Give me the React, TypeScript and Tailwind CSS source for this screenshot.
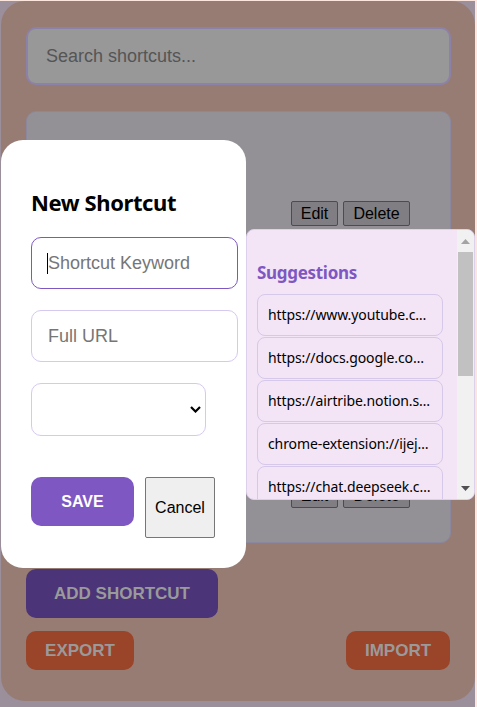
import React from "react";

const ARIAL = "font-['Liberation_Sans',Arial,sans-serif]";
const SEGOE = "font-['Noto_Sans','Open_Sans',sans-serif]";

const suggestions = [
  "https://www.youtube.com/watch?v=dQw4w9WgXcQ",
  "https://docs.google.com/document/d/1x2y3z",
  "https://airtribe.notion.site/course-notes",
  "chrome-extension://ijejnggjjphlenbhmjhhgcdpehhacaal/popup.html",
  "https://chat.deepseek.com/a/chat/s/123",
];

function ShortcutRow() {
  return (
    <div className={`flex justify-end gap-[5px] pr-[40px] ${ARIAL} text-[16px] text-black`}>
      <button className="h-[25px] w-[47px] rounded-[2px] border border-[#4d4b4f] bg-[#807e82]">Edit</button>
      <button className="h-[25px] w-[67px] rounded-[2px] border border-[#4d4b4f] bg-[#807e82]">Delete</button>
    </div>
  );
}

function Scrollbar() {
  return (
    <div className="flex w-[17px] shrink-0 flex-col items-center bg-[#f1f1f1]">
      <div className="flex h-[22px] w-full items-center justify-center">
        <svg width="9" height="5" viewBox="0 0 9 5">
          <path d="M0 5 L4.5 0 L9 5 Z" fill="#a3a3a3" />
        </svg>
      </div>
      <div className="h-[124px] w-[15px] bg-[#c1c1c1]" />
      <div className="flex-1" />
      <div className="flex h-[22px] w-full items-center justify-center">
        <svg width="9" height="5" viewBox="0 0 9 5">
          <path d="M0 0 L4.5 5 L9 0 Z" fill="#505050" />
        </svg>
      </div>
    </div>
  );
}

export default function App() {
  return (
    <div className="relative h-[707px] w-[477px] overflow-hidden bg-[#fbe5dc] pr-[2px] pt-px">
      <div className="h-full bg-[#9b8f9c] pl-px">
        {/* popup body, dimmed by the modal */}
        <div className="flex h-[700px] flex-col rounded-[24px] bg-[#977c74] pb-[26px] pl-[25px] pr-[24px] pt-[26px]">
          <div
            className={`flex h-[58px] items-center rounded-[10px] border-2 border-[#8c81a9] bg-[#989898] pl-[18px] ${ARIAL} text-[18px] text-[#555]`}
          >
            Search shortcuts...
          </div>

          <div className="mt-[26px] flex h-[432px] flex-col rounded-[10px] border border-[#8b879f] bg-[#939196] pt-[89px]">
            <ShortcutRow />
            <div className="h-[257px]" />
            <ShortcutRow />
          </div>

          <button
            className={`mt-[26px] h-[49px] w-[192px] rounded-[10px] bg-[#4b3477] ${ARIAL} text-[17px] font-bold text-[#9a9a9a]`}
          >
            ADD SHORTCUT
          </button>

          <div className={`mt-[13px] flex justify-between ${ARIAL} text-[17px] font-bold text-[#9a9a9a]`}>
            <button className="h-[39px] w-[108px] rounded-[10px] bg-[#9a442a]">EXPORT</button>
            <button className="mr-px h-[39px] w-[104px] rounded-[10px] bg-[#9a442a]">IMPORT</button>
          </div>
        </div>
      </div>

      {/* modal */}
      <div className="absolute left-px top-[140px] flex h-[428px] w-[245px] flex-col rounded-[22px] bg-white pl-[30px] pt-[49px]">
        <h2 className={`${SEGOE} text-[22px] font-bold leading-[27px] tracking-[-0.4px] text-black`}>New Shortcut</h2>
        <div className="relative mt-[21px]">
          <input
            readOnly
            placeholder="Shortcut Keyword"
            className={`h-[52px] w-[207px] rounded-[10px] border border-[#7e57c2] bg-white pl-[16px] ${ARIAL} text-[18px] outline-none placeholder:text-[#767676]`}
          />
          <div className="absolute left-[16px] top-[16px] h-[21px] w-px bg-black" />
        </div>
        <input
          readOnly
          placeholder="Full URL"
          className={`mt-[21px] h-[52px] w-[207px] rounded-[10px] border border-[#d6c9ef] bg-white pl-[16px] ${ARIAL} text-[18px] outline-none placeholder:text-[#767676]`}
        />
        <div className="relative mt-[21px] h-[53px] w-[175px] rounded-[10px] border border-[#d6c9ef] bg-white">
          <svg className="absolute left-[158px] top-[22px]" width="11" height="7" viewBox="0 0 11 7">
            <path d="M1 1 L5.5 5.5 L10 1" fill="none" stroke="#000" strokeWidth="2.2" />
          </svg>
        </div>
        <div className="mt-[41px] flex items-start gap-[11px]">
          <button
            className={`h-[49px] w-[103px] rounded-[10px] bg-[#7e57c2] ${ARIAL} text-[16px] font-bold text-white`}
          >
            SAVE
          </button>
          <button
            className={`h-[61px] w-[70px] rounded-[2px] border border-[#767676] bg-[#efefef] ${ARIAL} text-[16px] text-black`}
          >
            Cancel
          </button>
        </div>
      </div>

      {/* suggestions dropdown */}
      <div className="absolute left-[246px] top-[229px] flex h-[271px] w-[229px] overflow-hidden rounded-[8px] border border-[#ddd0ea] bg-[#f3e5f5]">
        <div className="min-w-0 flex-1 pl-[10px] pr-[14px] pt-[31px]">
          <h3 className={`${SEGOE} text-[17px] font-bold leading-[24px] tracking-[-0.3px] text-[#7e57c2]`}>Suggestions</h3>
          <div className="mt-[9px] flex flex-col gap-px">
            {suggestions.map((s) => (
              <div
                key={s}
                className={`h-[42px] shrink-0 truncate rounded-[8px] border border-[#d6c8ea] px-[10px] ${SEGOE} text-[14px] leading-[40px] tracking-[-0.1px] text-black`}
              >
                {s}
              </div>
            ))}
          </div>
        </div>
        <Scrollbar />
      </div>
    </div>
  );
}
